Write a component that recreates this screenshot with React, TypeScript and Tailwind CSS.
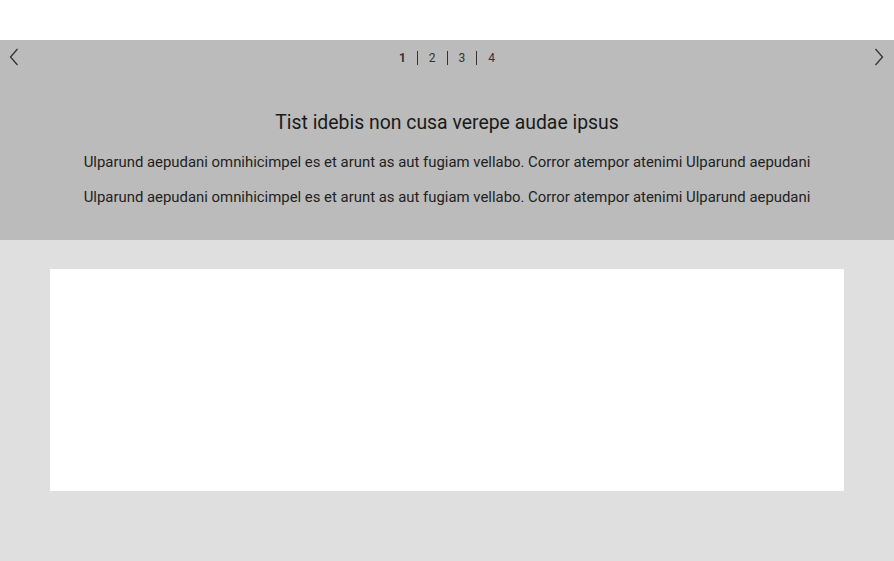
import React from 'react';

const Chevron = ({ dir }: { dir: 'left' | 'right' }) => (
    <svg width="10" height="18" viewBox="0 0 10 18" fill="none" stroke="#333" strokeWidth="1.3">
        {dir === 'left' ? <path d="M8.5 1 L1.5 9 L8.5 17" /> : <path d="M1.5 1 L8.5 9 L1.5 17" />}
    </svg>
);

export default function App() {
    const pages = [1, 2, 3, 4];
    return (
        <div className="w-[894px] h-[561px] bg-white font-['Roboto',sans-serif] overflow-hidden">
            <div className="h-[40px] bg-white" />
            <div className="relative h-[200px] bg-[#bbbbbb] flex flex-col items-center">
                <button className="absolute left-[9px] top-[8px] p-0">
                    <Chevron dir="left" />
                </button>
                <button className="absolute right-[10px] top-[8px] p-0">
                    <Chevron dir="right" />
                </button>
                <div className="flex items-center pt-[10px] h-[26px] text-[12px] text-[#333] leading-none">
                    {pages.map((p, i) => (
                        <React.Fragment key={p}>
                            {i > 0 && <span className="w-px h-[14px] bg-[#333] mx-[11px]" />}
                            <span className={p === 1 ? 'font-bold' : ''}>{p}</span>
                        </React.Fragment>
                    ))}
                </div>
                <h2 className="mt-[44px] text-[19.4px] leading-[26px] text-[#1a1a1a]">Tist idebis non cusa verepe audae ipsus</h2>
                <p className="mt-[16px] text-[14.9px] leading-[20px] text-[#222]">
                    Ulparund aepudani omnihicimpel es et arunt as aut fugiam vellabo. Corror atempor atenimi Ulparund aepudani
                </p>
                <p className="mt-[15px] text-[14.9px] leading-[20px] text-[#222]">
                    Ulparund aepudani omnihicimpel es et arunt as aut fugiam vellabo. Corror atempor atenimi Ulparund aepudani
                </p>
            </div>
            <div className="h-[321px] bg-[#dfdfdf] px-[50px] pt-[29px]">
                <div className="h-[222px] bg-white" />
            </div>
        </div>
    );
}
